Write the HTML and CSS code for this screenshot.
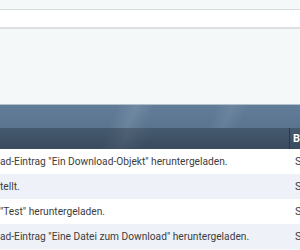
FILE: index.html
```html
<!DOCTYPE html>
<html lang="de">

<head>
  <meta charset="UTF-8">
  <title>Aktivitäten</title>
  <link rel="stylesheet" href="styles.css">
</head>

<body>
  <!-- Suchleiste -->
  <div class="search-bar"></div>

  <!-- Protokoll -->
  <div class="log">
    <div class="log-title"></div>
    <div class="log-cols">
      <div class="col-msg"></div>
      <div class="col-user">B</div>
    </div>
    <div class="log-row">
      <div class="col-msg">ad-Eintrag "Ein Download-Objekt" heruntergeladen.</div>
      <div class="col-user">S</div>
    </div>
    <div class="log-row alt">
      <div class="col-msg">tellt.</div>
      <div class="col-user">S</div>
    </div>
    <div class="log-row">
      <div class="col-msg">"Test" heruntergeladen.</div>
      <div class="col-user">S</div>
    </div>
    <div class="log-row alt">
      <div class="col-msg">ad-Eintrag "Eine Datei zum Download" heruntergeladen.</div>
      <div class="col-user">S</div>
    </div>
  </div>
</body>

</html>
```

FILE: styles.css
```css
body {
  margin: 0;
  background: #f4f8f9;
  font-family: Roboto, "Liberation Sans", sans-serif;
  font-size: 10.2px;
  color: #3d3d3d;
  overflow: hidden;
}

/* Search bar */
.search-bar {
  margin-top: 9px;
  height: 17px;
  background: #fff;
  border-top: 1px solid #d9dcdc;
  border-bottom: 2px solid #dcdfdf;
}

/* Log table */
.log {
  margin-top: 75px;
  border-top: 1px solid #b3c0cc;
}

.log-title {
  height: 23px;
  background:
    linear-gradient(115deg, transparent 38%, rgba(255, 255, 255, 0.1) 44%, transparent 50%),
    linear-gradient(115deg, transparent 70%, rgba(255, 255, 255, 0.07) 75%, transparent 80%),
    linear-gradient(#627d99, #5a7490);
}

.log-cols {
  display: flex;
  height: 21px;
  background:
    linear-gradient(115deg, transparent 35%, rgba(255, 255, 255, 0.06) 42%, transparent 50%),
    linear-gradient(#45596e, #394b5e);
  color: #fff;
  font-weight: bold;
  font-size: 11px;
}

.log-cols .col-user {
  border-left: 1px solid #2c3a48;
  line-height: 21px;
}

.log-row {
  display: flex;
  height: 25px;
  line-height: 25px;
  background: #fff;
  font-size: 10.2px;
}

.log-row.alt {
  background: #eef1f7;
}

.col-msg {
  flex: 1;
  white-space: nowrap;
  overflow: hidden;
}

.col-user {
  width: 7px;
  padding-left: 3px;
  overflow: hidden;
  white-space: nowrap;
}

.log-row .col-user {
  padding-left: 5px;
  width: 5px;
  font-size: 11px;
}
```
